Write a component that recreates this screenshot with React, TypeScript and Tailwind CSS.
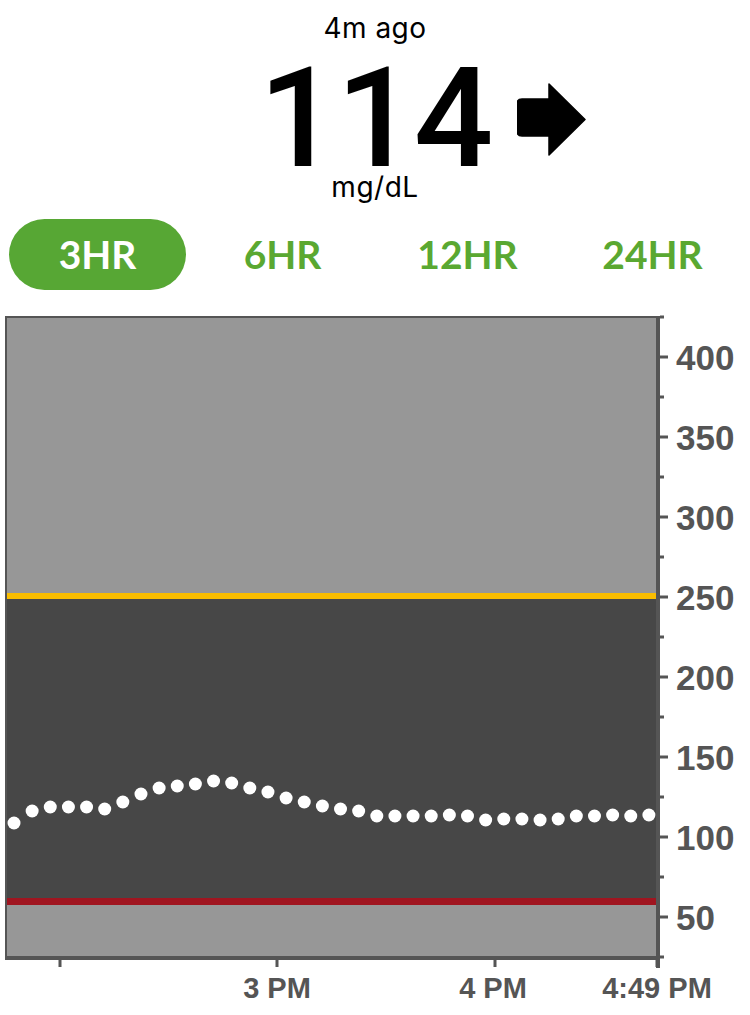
import React from 'react';

// glucose readings, plotted as y pixel positions inside the chart
const readings = [
  823, 811, 807, 807, 807, 809, 802, 794, 788, 786, 784, 781, 783, 788, 792, 798, 802, 806,
  809, 811, 816, 816, 816, 816, 815, 816, 820, 819, 819, 820, 819, 816, 816, 815, 816, 815,
];

const tabs = ['3HR', '6HR', '12HR', '24HR'];

const yLabels = [400, 350, 300, 250, 200, 150, 100, 50];

// chart svg starts at page y=300
const TOP = 300;
const yOf = (v: number) => 917 - (v - 50) * 1.6 - TOP;

function TrendArrow() {
  return (
    <svg width="69" height="73" viewBox="0 0 69 73" className="ml-[26px] mt-[2px]">
      <path
        d="M5 16 H32 V1 L68 36.5 L32 72 V53 H5 Q0 53 0 48 V21 Q0 16 5 16 Z"
        fill="#000"
        stroke="#000"
        strokeWidth="1.5"
        strokeLinejoin="round"
      />
    </svg>
  );
}

function Chart() {
  const font = "'Liberation Sans', Arial, sans-serif";
  return (
    <svg width="750" height="715" viewBox="0 0 750 715" className="block">
      {/* bands */}
      <rect x="7" y={318 - TOP} width="649" height={597 - 318} fill="#979797" />
      <rect x="7" y={597 - TOP} width="649" height={902 - 597} fill="#474747" />
      <rect x="7" y={902 - TOP} width="649" height={957 - 902} fill="#979797" />
      {/* high / low lines */}
      <rect x="7" y={593 - TOP} width="649" height="6" fill="#f9bd00" />
      <rect x="7" y={898 - TOP} width="649" height="7" fill="#a01520" />
      {/* frame */}
      <rect x="5" y={316 - TOP} width="653" height="2" fill="#555" />
      <rect x="5" y={316 - TOP} width="2" height={957 - 316} fill="#555" />
      <rect x="656" y={316 - TOP} width="4" height={968 - 316} fill="#555" />
      <rect x="5" y={956 - TOP} width="655" height="4" fill="#555" />

      {/* y ticks */}
      {yLabels.map((v) => (
        <g key={v}>
          <rect x="660" y={yOf(v) - 1.5} width="8" height="3" fill="#555" />
          <rect x="660" y={yOf(v + 25) - 1.5} width="4" height="3" fill="#555" />
          <text x="676" y={yOf(v) + 12.5} fontFamily={font} fontWeight="700" fontSize="35" fill="#555">
            {v}
          </text>
        </g>
      ))}
      <rect x="660" y={yOf(25) - 1.5} width="4" height="3" fill="#555" />

      {/* x ticks */}
      {[60, 277, 495, 657].map((x) => (
        <rect key={x} x={x - 1.5} y={960 - TOP} width="3" height="7" fill="#555" />
      ))}
      <text x="277" y={998 - TOP} textAnchor="middle" fontFamily={font} fontWeight="700" fontSize="29" fill="#555">
        3 PM
      </text>
      <text x="493" y={998 - TOP} textAnchor="middle" fontFamily={font} fontWeight="700" fontSize="29" fill="#555">
        4 PM
      </text>
      <text x="657" y={998 - TOP} textAnchor="middle" fontFamily={font} fontWeight="700" fontSize="29" fill="#555">
        4:49 PM
      </text>

      {/* readings */}
      {readings.map((y, i) => (
        <circle key={i} cx={14 + i * 18.14} cy={y - TOP} r="6.5" fill="#fff" />
      ))}
    </svg>
  );
}

export default function App() {
  return (
    <div className="h-[1015px] w-[750px] overflow-hidden bg-white">
      <div className="flex flex-col items-center pt-[14px] font-['Inter',sans-serif] text-black">
        <div className="text-[28px] leading-none tracking-[0.5px]">4m ago</div>
        <div className="mt-[21px] grid w-full grid-cols-[1fr_auto_1fr] items-center">
          <div />
          <div className="font-['Roboto',sans-serif] text-[140px] font-medium leading-[110px] tracking-[-2px]">114</div>
          <div className="flex items-center">
            <TrendArrow />
          </div>
        </div>
        <div className="text-[28px] leading-none tracking-[0.5px]">mg/dL</div>
      </div>

      <div className="mt-[18px] grid grid-cols-4 px-[5px] font-['Lato',sans-serif] text-[39px] font-bold">
        {tabs.map((t, i) => (
          <div key={t} className="flex justify-center">
            <div
              className={
                i === 0
                  ? 'flex h-[71px] w-[177px] items-center justify-center rounded-full bg-[#57a734] text-white'
                  : 'flex h-[71px] w-[177px] items-center justify-center text-[#5aa831]'
              }
            >
              {t}
            </div>
          </div>
        ))}
      </div>

      <div className="mt-[10px]">
        <Chart />
      </div>
    </div>
  );
}
